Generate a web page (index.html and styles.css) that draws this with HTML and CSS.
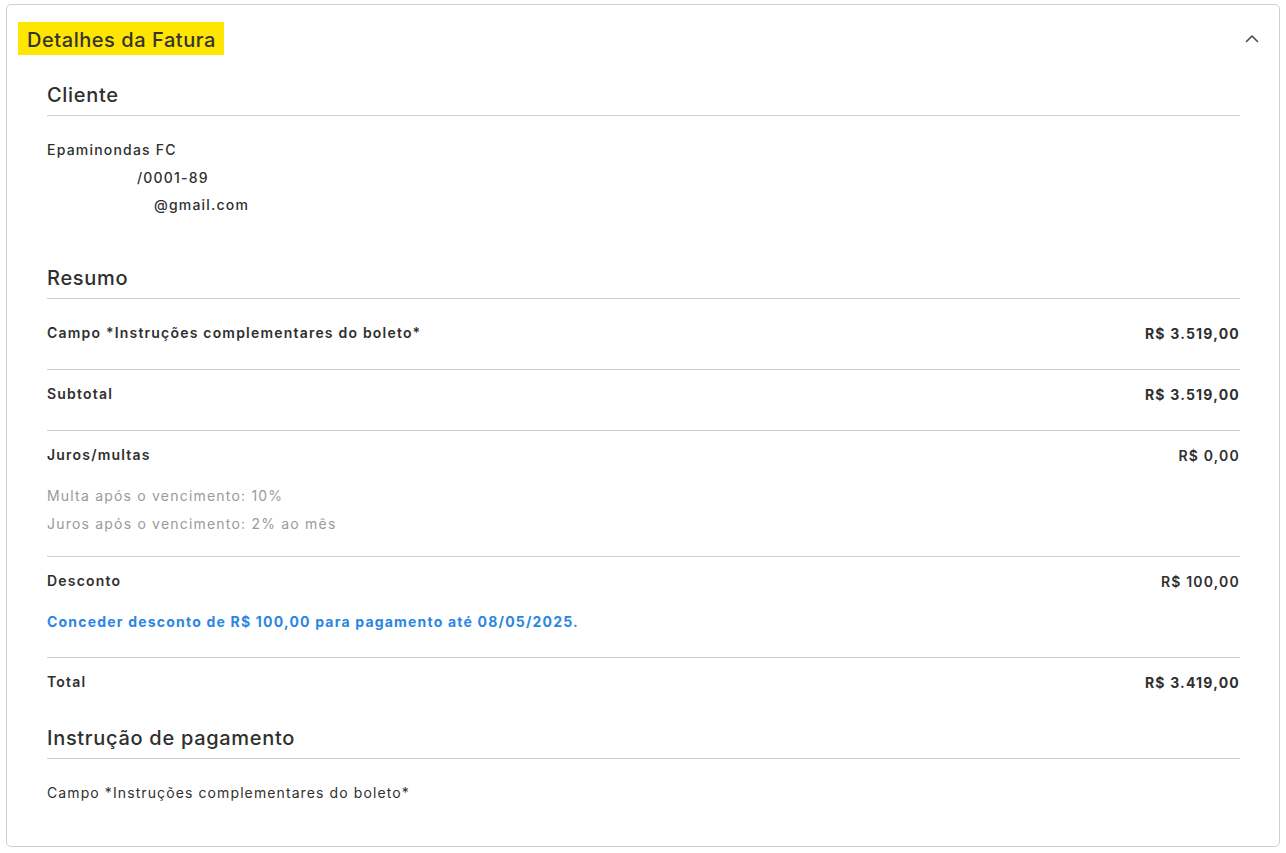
FILE: index.html
```html
<!DOCTYPE html>
<html lang="pt-BR">
<head>
<meta charset="utf-8">
<title>Detalhes da Fatura</title>
<link rel="stylesheet" href="styles.css">
</head>
<body>
<section class="card">
  <header class="card-header">
    <h1 class="card-title">Detalhes da Fatura</h1>
    <button class="toggle" aria-label="Recolher">
      <svg width="14" height="14" viewBox="0 0 14 14"><path d="M1.5 9.5 L7 4 L12.5 9.5" fill="none" stroke="#4a4a4a" stroke-width="1.6" stroke-linecap="round" stroke-linejoin="round"/></svg>
    </button>
  </header>
  <div class="card-body">
    <h2 class="section-title">Cliente</h2>
    <div class="client">
      <div>Epaminondas FC</div>
      <div class="ind-1">/0001-89</div>
      <div class="ind-2">@gmail.com</div>
    </div>

    <h2 class="section-title resumo">Resumo</h2>
    <div class="row first">
      <span class="label">Campo *Instruções complementares do boleto*</span>
      <span class="amount">R$ 3.519,00</span>
    </div>
    <div class="row">
      <span class="label">Subtotal</span>
      <span class="amount">R$ 3.519,00</span>
    </div>
    <div class="row juros">
      <div class="row-main">
        <span class="label">Juros/multas</span>
        <span class="amount light">R$ 0,00</span>
      </div>
      <div class="notes">
        <div>Multa após o vencimento: 10%</div>
        <div>Juros após o vencimento: 2% ao mês</div>
      </div>
    </div>
    <div class="row desconto">
      <div class="row-main">
        <span class="label">Desconto</span>
        <span class="amount light">R$ 100,00</span>
      </div>
      <div class="discount-note">Conceder desconto de R$ 100,00 para pagamento até 08/05/2025.</div>
    </div>
    <div class="row last">
      <span class="label strong">Total</span>
      <span class="amount">R$ 3.419,00</span>
    </div>

    <h2 class="section-title instrucao">Instrução de pagamento</h2>
    <p class="instr-text">Campo *Instruções complementares do boleto*</p>
  </div>
</section>
</body>
</html>
```
FILE: styles.css
```css
* { box-sizing: border-box; }
html, body { margin: 0; padding: 0; background: #fff; }
body {
  font-family: Inter, "Open Sans", "DejaVu Sans", sans-serif;
  color: #2f2f2f;
  padding: 4px 6px 0 6px;
}
.card {
  border: 1px solid #c9d2dc;
  border-radius: 5px;
  height: 843px;
}
.card-header {
  display: flex;
  align-items: center;
  justify-content: space-between;
  padding: 17px 20px 0 11px;
}
.card-title {
  margin: 0;
  background: #ffe600;
  font-size: 20px;
  font-weight: 500;
  letter-spacing: 0.55px;
  line-height: 30px;
  height: 33px;
  padding: 3px 8px 0 9px;
  color: #333;
}
.toggle {
  border: 0;
  background: none;
  padding: 0;
  width: 14px;
  height: 14px;
  display: flex;
}
.card-body {
  padding: 0 39px 0 40px;
}
.section-title {
  margin: 28px 0 0;
  font-size: 20px;
  font-weight: 500;
  letter-spacing: 0.7px;
  line-height: 24px;
  padding-bottom: 8px;
  border-bottom: 1px solid #c9d2dc;
  color: #2f2f2f;
}
.section-title.resumo { margin-top: 47px; }
.section-title.instrucao { margin-top: 33px; }
.client {
  padding-top: 20px;
  font-size: 14px;
  font-weight: 500;
  letter-spacing: 1.2px;
  line-height: 27.5px;
}
.ind-1 { padding-left: 90px; }
.ind-2 { padding-left: 107px; }
.row {
  font-size: 14px;
  letter-spacing: 1.2px;
  line-height: 20px;
  padding: 14px 0 25px;
  border-bottom: 1px solid #c9d2dc;
  display: flex;
  justify-content: space-between;
}
.row.first { padding-top: 24px; }
.row.juros, .row.desconto { display: block; }
.row.juros { padding-bottom: 18px; }
.row.last { border-bottom: 0; padding-bottom: 0; }
.row-main { display: flex; justify-content: space-between; }
.label { font-weight: 600; }
.amount { font-weight: 700; padding-top: 1px; }
.amount.light { font-weight: 600; }
.notes {
  margin-top: 16px;
  color: #9a9a9a;
  line-height: 28px;
}
.discount-note {
  margin-top: 20px;
  color: #2b86e2;
  font-weight: 700;
}
.instr-text {
  margin: 24px 0 0;
  font-size: 14px;
  letter-spacing: 1.1px;
  line-height: 20px;
}
```
